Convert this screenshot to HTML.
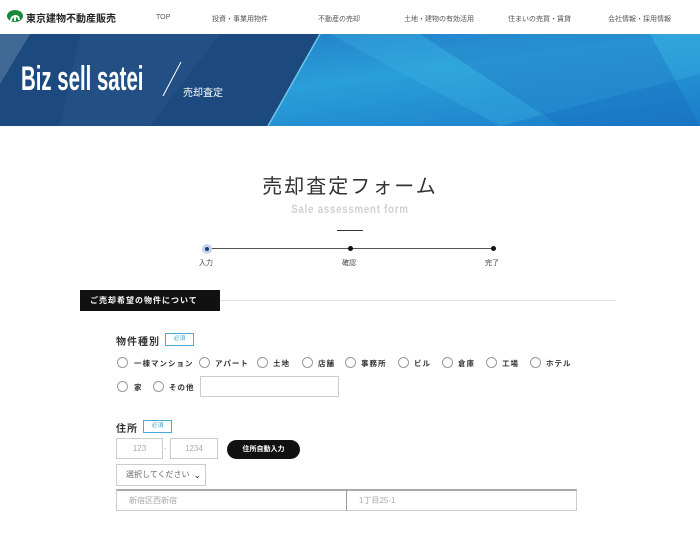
<!DOCTYPE html>
<html><head><meta charset="utf-8"><style>
*{margin:0;padding:0;box-sizing:border-box}
body{width:700px;height:536px;overflow:hidden;background:#fff;font-family:"Liberation Sans","Noto Sans CJK JP",sans-serif;color:#222;position:relative}
.a{position:absolute;white-space:nowrap}
.nav{font-size:7px;color:#555;top:14px}
.rad{position:absolute;width:11px;height:11px;border:1px solid #999;border-radius:50%}
.lb{font-size:7.5px;font-weight:bold;color:#333;letter-spacing:1px}
.badge{position:absolute;border:1px solid #4aa8d8;color:#4aa8d8;font-size:6px;text-align:center;line-height:11px;height:13px}
.box{position:absolute;border:1px solid #ccc;font-size:8px;color:#aaa;text-align:center}
</style></head><body>
<svg class="a" style="left:7px;top:10px" width="16" height="12" viewBox="0 0 16 12"><ellipse cx="8" cy="6" rx="8" ry="6" fill="#1a8a3a"/><path d="M4 11 C4 5 12 4 12 10" stroke="#fff" stroke-width="2" fill="none"/><path d="M8 11 V6" stroke="#fff" stroke-width="2"/></svg>
<div class="a" style="left:26px;top:10px;font-size:10px;font-weight:bold;color:#222">東京建物不動産販売</div>
<div class="a nav" style="left:156px">TOP</div>
<div class="a nav" style="left:212px">投資・事業用物件</div>
<div class="a nav" style="left:318px">不動産の売却</div>
<div class="a nav" style="left:404px">土地・建物の有効活用</div>
<div class="a nav" style="left:508px">住まいの売買・賃貸</div>
<div class="a nav" style="left:608px">会社情報・採用情報</div>
<svg class="a" style="left:0;top:34px" width="700" height="92" viewBox="0 0 700 92">
<defs><linearGradient id="g" x1="0" y1="0" x2="1" y2="1"><stop offset="0" stop-color="#1e6fc0"/><stop offset="0.5" stop-color="#2a9fd8"/><stop offset="1" stop-color="#1a7cc8"/></linearGradient></defs>
<rect width="700" height="92" fill="url(#g)"/>
<polygon points="330,0 700,0 700,40 500,92" fill="#3bb3e3" opacity=".35"/>
<polygon points="420,0 560,92 700,92 650,0" fill="#1565b8" opacity=".3"/>
<polygon points="0,0 320,0 268,92 0,92" fill="#1d4a7e"/>
<polygon points="0,0 30,0 0,50" fill="#5a7fa5" opacity=".6"/>
<polygon points="80,0 220,0 150,92 60,92" fill="#27558a" opacity=".5"/>
<line x1="320" y1="0" x2="268" y2="92" stroke="#6cc6ee" stroke-width="1.5"/>
<line x1="181" y1="28" x2="163" y2="62" stroke="#fff" stroke-width="1"/>
</svg>
<div class="a" style="left:21px;top:60px;font-size:34px;font-weight:bold;color:#fff;transform:scaleX(.6);transform-origin:left;letter-spacing:0">Biz sell satei</div>
<div class="a" style="left:183px;top:84px;font-size:10px;color:#fff">売却査定</div>
<div class="a" style="left:0;width:700px;top:170px;text-align:center;font-size:20px;color:#333;letter-spacing:2px">売却査定フォーム</div>
<div class="a" style="left:0;width:700px;top:202px;text-align:center;font-size:12px;font-weight:bold;color:#d0d0d0;letter-spacing:1px;transform:scaleX(.8)">Sale assessment form</div>
<div class="a" style="left:337px;top:230px;width:26px;height:1px;background:#333"></div>
<div class="a" style="left:207px;top:248px;width:286px;height:1px;background:#555"></div>
<div class="a" style="left:202px;top:244px;width:10px;height:10px;border-radius:50%;background:#c8d4e6"></div>
<div class="a" style="left:205px;top:247px;width:4px;height:4px;border-radius:50%;background:#1a3d8f"></div>
<div class="a" style="left:348px;top:246px;width:5px;height:5px;border-radius:50%;background:#111"></div>
<div class="a" style="left:491px;top:246px;width:5px;height:5px;border-radius:50%;background:#111"></div>
<div class="a" style="left:199px;top:258px;font-size:7px;color:#444">入力</div>
<div class="a" style="left:342px;top:258px;font-size:7px;color:#444">確認</div>
<div class="a" style="left:485px;top:258px;font-size:7px;color:#444">完了</div>
<div class="a" style="left:220px;top:300px;width:396px;height:1px;background:#e3e3e3"></div>
<div class="a" style="left:80px;top:290px;width:140px;height:21px;background:#111;color:#fff;font-size:8px;line-height:21px;padding-left:10px;letter-spacing:1px;font-weight:bold">ご売却希望の物件について</div>
<div class="a" style="left:116px;top:333px;font-size:10px;font-weight:bold;color:#333;letter-spacing:1px">物件種別</div>
<div class="badge" style="left:165px;top:333px;width:29px">必須</div>
<div class="rad" style="left:117px;top:357px"></div><div class="a lb" style="left:134px;top:358px">一棟マンション</div>
<div class="rad" style="left:199px;top:357px"></div><div class="a lb" style="left:215px;top:358px">アパート</div>
<div class="rad" style="left:257px;top:357px"></div><div class="a lb" style="left:273px;top:358px">土地</div>
<div class="rad" style="left:302px;top:357px"></div><div class="a lb" style="left:318px;top:358px">店舗</div>
<div class="rad" style="left:345px;top:357px"></div><div class="a lb" style="left:361px;top:358px">事務所</div>
<div class="rad" style="left:398px;top:357px"></div><div class="a lb" style="left:414px;top:358px">ビル</div>
<div class="rad" style="left:442px;top:357px"></div><div class="a lb" style="left:458px;top:358px">倉庫</div>
<div class="rad" style="left:486px;top:357px"></div><div class="a lb" style="left:502px;top:358px">工場</div>
<div class="rad" style="left:530px;top:357px"></div><div class="a lb" style="left:546px;top:358px">ホテル</div>
<div class="rad" style="left:117px;top:381px"></div><div class="a lb" style="left:134px;top:382px">家</div>
<div class="rad" style="left:153px;top:381px"></div><div class="a lb" style="left:169px;top:382px">その他</div>
<div class="box" style="left:200px;top:376px;width:139px;height:21px"></div>
<div class="a" style="left:116px;top:420px;font-size:10px;font-weight:bold;color:#333;letter-spacing:1px">住所</div>
<div class="badge" style="left:143px;top:420px;width:29px">必須</div>
<div class="box" style="left:116px;top:438px;width:47px;height:21px;line-height:19px">123</div>
<div class="a" style="left:164px;top:446px;font-size:7px;color:#aaa">-</div>
<div class="box" style="left:170px;top:438px;width:48px;height:21px;line-height:19px">1234</div>
<div class="a" style="left:227px;top:440px;width:73px;height:19px;border-radius:10px;background:#111;color:#fff;font-size:7px;font-weight:bold;text-align:center;line-height:19px">住所自動入力</div>
<div class="box" style="left:116px;top:464px;width:90px;height:22px;line-height:20px;color:#666;text-align:left;padding-left:9px;font-size:8px">選択してください<span style="position:absolute;right:4px;top:0;font-size:9px;color:#222">⌄</span></div>
<div class="box" style="left:116px;top:489px;width:231px;height:22px;line-height:20px;text-align:left;padding-left:12px;border-top:2px solid #aaa">新宿区西新宿</div>
<div class="box" style="left:346px;top:489px;width:231px;height:22px;line-height:20px;text-align:left;padding-left:12px;border-top:2px solid #aaa;border-left:1px solid #999">1丁目25-1</div>
</body></html>
